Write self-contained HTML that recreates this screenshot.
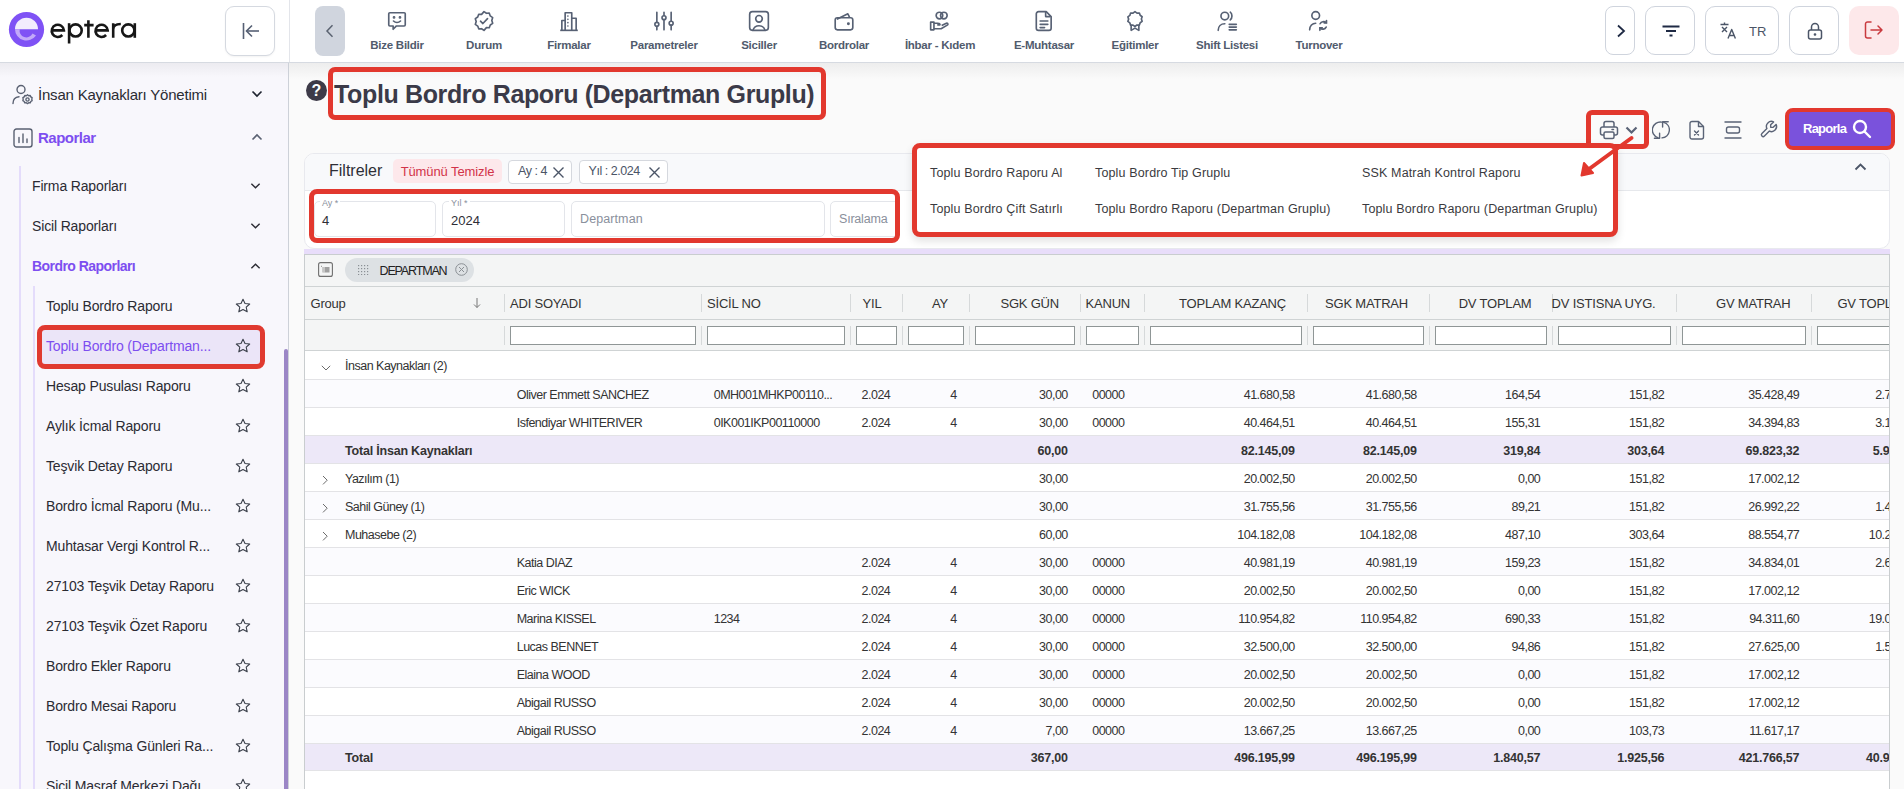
<!DOCTYPE html>
<html><head><meta charset="utf-8">
<style>
*{box-sizing:border-box;margin:0;padding:0}
html,body{width:1904px;height:789px;overflow:hidden;background:#fafafa;font-family:"Liberation Sans",sans-serif;color:#333}
.abs{position:absolute}
#hdr{position:absolute;left:0;top:0;width:1904px;height:63px;background:#fff;border-bottom:1px solid #d6dae1}
#side{position:absolute;left:0;top:63px;width:289px;height:726px;background:#f8f7fc;border-right:1px solid #cdd1d8;overflow:hidden}
.navi{position:absolute;top:0;height:62px;text-align:center}
.navi .lbl{position:absolute;top:38.5px;left:-20px;right:-20px;font-size:11.5px;font-weight:bold;color:#515b6d;white-space:nowrap;letter-spacing:-0.25px}
.navi svg{position:absolute;top:10px;left:50%;margin-left:-11px}
.hbtn{position:absolute;top:6px;height:49px;border:1px solid #cfd4dd;border-radius:10px;background:#fff}
.s2{position:absolute;left:32px;font-size:14px;color:#2b2b33;white-space:nowrap;letter-spacing:-0.15px;margin-top:1px}
.s3{position:absolute;left:46px;font-size:14px;color:#2b2b33;white-space:nowrap;letter-spacing:-0.15px;margin-top:1px}
.chev{position:absolute;left:251px}
.star{position:absolute;left:236px}
.inp{border:1px solid #e3e5ea;border-radius:5px;background:#fff}
.lblsm{font-size:9px;color:#8a909c;background:#fff;padding:0 2px}
.ht{font-size:13px;color:#333;white-space:nowrap;letter-spacing:-0.2px}
.nm{font-size:12.5px;color:#333;white-space:nowrap;letter-spacing:-0.5px}
.num{font-size:12.5px;color:#333;white-space:nowrap;letter-spacing:-0.5px}
.ht2{font-size:12.5px;color:#333;white-space:nowrap;letter-spacing:-0.5px}
.b{font-weight:bold;letter-spacing:-0.2px}
.mi{font-size:12.5px;color:#3a3a40;white-space:nowrap;letter-spacing:0.15px}
</style></head><body>
<div id="hdr">
  <!-- logo -->
  <svg class="abs" style="left:8px;top:11px" width="37" height="37" viewBox="0 0 37 37">
    <circle cx="18.5" cy="18.5" r="17.6" fill="#7f52f5"/>
    <path d="M7 18.2 A11.5 11.5 0 0 1 30 18.2 Z" fill="#f2edfd"/>
    <path d="M7 18.2 A11.5 11.5 0 0 0 28 24.5 L24.5 22.5 A6.8 6.8 0 0 1 11.7 18.2 Z" fill="#c2a9f9"/>
  </svg>
  <svg class="abs" style="left:48px;top:16px" width="92" height="30" viewBox="48 16 92 30" fill="none" stroke="#171717" stroke-width="2.6">
    <path d="M51.7 30.4h12.2A6.1 6.1 0 1 0 62.3 35"/>
    <path d="M69.1 23.2V43.5"/><circle cx="75.6" cy="30.45" r="6.1"/>
    <path d="M88.4 20.2V37.8M84.2 25.1h9.4"/>
    <path d="M95.5 30.4h12.2A6.1 6.1 0 1 0 106.1 35"/>
    <path d="M113.2 23.2V37.8M113.2 29.5c0-3.5 2.5-5.5 7.6-5.5"/>
    <circle cx="128.3" cy="30.45" r="6.1"/><path d="M134.8 23.2V37.8"/>
  </svg>
  <!-- collapse -->
  <div class="hbtn" style="left:225px;width:50px;height:50px;border-radius:9px;border-color:#d5d9e0;box-shadow:0 1px 2px rgba(0,0,0,.05)">
    <svg class="abs" style="left:14px;top:10px" width="22" height="22" viewBox="0 0 22 22" fill="none" stroke="#566074" stroke-width="1.6"><path d="M3.5 6v16"/><path d="M19 14H6.5"/><path d="M12 8.5 6.5 14l5.5 5.5"/></svg>
  </div>
  <div class="abs" style="left:289px;top:0;width:1px;height:62px;background:#e3e5ea"></div>
  <!-- back -->
  <div class="abs" style="left:315px;top:6px;width:30px;height:50px;border-radius:8px;background:#d0d5de">
    <svg class="abs" style="left:8px;top:17px" width="14" height="16" viewBox="0 0 14 16" fill="none" stroke="#5a6270" stroke-width="1.5"><path d="M9.5 2.3 4 8l5.5 5.7"/></svg>
  </div>

  <!-- nav items -->
  <div class="navi" style="left:357px;width:80px"><svg width="22" height="22" viewBox="0 0 20 20" fill="none" stroke="#576174" stroke-width="1.5" stroke-linejoin="round"><path d="M3.5 2.5h13a1 1 0 0 1 1 1v10a1 1 0 0 1-1 1H9.5l-3 3v-3h-3a1 1 0 0 1-1-1v-10a1 1 0 0 1 1-1z"/><circle cx="7.3" cy="6.8" r=".5" fill="#576174"/><circle cx="12.7" cy="6.8" r=".5" fill="#576174"/><path d="M6.8 10c1.8 1.6 4.6 1.6 6.4 0" stroke-linecap="round"/></svg><div class="lbl">Bize Bildir</div></div>
  <div class="navi" style="left:444px;width:80px"><svg width="22" height="22" viewBox="0 0 20 20" fill="none" stroke="#576174" stroke-width="1.5" stroke-linejoin="round"><path d="M10 1.5l2.2 1.5 2.6-.1.9 2.5 2.2 1.5-.8 2.6.8 2.6-2.2 1.5-.9 2.5-2.6-.1L10 18.5l-2.2-1.5-2.6.1-.9-2.5-2.2-1.5.8-2.6-.8-2.6 2.2-1.5.9-2.5 2.6.1z"/><path d="M6.8 10.2l2.2 2.1 4.2-4.4" stroke-linecap="round"/></svg><div class="lbl">Durum</div></div>
  <div class="navi" style="left:529px;width:80px"><svg width="22" height="22" viewBox="0 0 20 20" fill="none" stroke="#576174" stroke-width="1.5" stroke-linejoin="round"><path d="M2 18.5h16"/><path d="M6.5 18.5V2.5h6v16"/><path d="M12.5 7.5h4v11"/><path d="M3.5 18.5v-9h3"/><path d="M9 5.5v0M9 8.5v0M9 11.5v0M9 14.5v0" stroke-linecap="round"/></svg><div class="lbl">Firmalar</div></div>
  <div class="navi" style="left:619px;width:90px"><svg width="22" height="22" viewBox="0 0 20 20" fill="none" stroke="#576174" stroke-width="1.5" stroke-linecap="round"><path d="M3.5 2v9M3.5 15v3M10 2v3M10 9v9M16.5 2v8M16.5 14v4"/><circle cx="3.5" cy="13" r="1.8"/><circle cx="10" cy="7" r="1.8"/><circle cx="16.5" cy="12" r="1.8"/></svg><div class="lbl">Parametreler</div></div>
  <div class="navi" style="left:719px;width:80px"><svg width="22" height="22" viewBox="0 0 20 20" fill="none" stroke="#576174" stroke-width="1.5" stroke-linejoin="round"><rect x="1.5" y="1.5" width="17" height="17" rx="2.5"/><circle cx="10" cy="8" r="3"/><path d="M4.5 18.5c.8-2.8 3-4.2 5.5-4.2s4.7 1.4 5.5 4.2"/></svg><div class="lbl">Siciller</div></div>
  <div class="navi" style="left:804px;width:80px"><svg width="22" height="22" viewBox="0 0 20 20" fill="none" stroke="#576174" stroke-width="1.5" stroke-linejoin="round"><path d="M3.5 8.5l10-5 1.5 3"/><rect x="2" y="7" width="16" height="11" rx="2"/><circle cx="14" cy="12.5" r=".6" fill="#576174"/></svg><div class="lbl">Bordrolar</div></div>
  <div class="navi" style="left:895px;width:90px"><svg width="22" height="22" viewBox="0 0 20 20" fill="none" stroke="#576174" stroke-width="1.5" stroke-linejoin="round"><circle cx="9.5" cy="5" r="3"/><circle cx="13.5" cy="5" r="3"/><path d="M1.5 11h3v7h-3z"/><path d="M4.5 12h3.5c1 0 2 .8 2 1.5H7.5M4.5 17h6.5l6-3.5c.6-.8-.2-1.8-1.2-1.5l-4.3 2"/></svg><div class="lbl">İhbar - Kıdem</div></div>
  <div class="navi" style="left:1004px;width:80px"><svg width="22" height="22" viewBox="0 0 20 20" fill="none" stroke="#576174" stroke-width="1.5" stroke-linejoin="round"><path d="M5 1.5h7l4.5 4.5v10.5a2 2 0 0 1-2 2H5a2 2 0 0 1-2-2v-13a2 2 0 0 1 2-2z"/><path d="M11.5 1.5v4.5H16"/><path d="M6.5 10h7M6.5 13h7M6.5 16h4" stroke-linecap="round"/></svg><div class="lbl">E-Muhtasar</div></div>
  <div class="navi" style="left:1095px;width:80px"><svg width="22" height="22" viewBox="0 0 20 20" fill="none" stroke="#576174" stroke-width="1.5" stroke-linejoin="round"><path d="M10 1.5l1.8 1.3 2.2-.1.7 2.1 1.8 1.3-.7 2.1.7 2.1-1.8 1.3-.7 2.1-2.2-.1L10 15l-1.8-1.3-2.2.1-.7-2.1-1.8-1.3.7-2.1-.7-2.1 1.8-1.3.7-2.1 2.2.1z"/><path d="M6.5 13.5v5l3.5-2 3.5 2v-5"/></svg><div class="lbl">Eğitimler</div></div>
  <div class="navi" style="left:1187px;width:80px"><svg width="22" height="22" viewBox="0 0 20 20" fill="none" stroke="#576174" stroke-width="1.5" stroke-linecap="round"><circle cx="8" cy="5.5" r="3.5"/><path d="M2 18.5c0-3.5 2.5-6 6-6"/><path d="M13 2c1 .8 1.5 2 1.5 3.5s-.5 2.7-1.5 3.5"/><path d="M12 13h6.5M12 15.5h6.5M12 18h6.5"/></svg><div class="lbl">Shift Listesi</div></div>
  <div class="navi" style="left:1279px;width:80px"><svg width="22" height="22" viewBox="0 0 20 20" fill="none" stroke="#576174" stroke-width="1.5" stroke-linecap="round"><circle cx="7" cy="5" r="3.5"/><path d="M1.5 18c0-3.5 2.5-6 5.5-6"/><path d="M16.5 11.5a3.5 3.5 0 0 0-5.5 1M11 16.5a3.5 3.5 0 0 0 5.5-1"/><path d="M16.8 9.5v2.2h-2.2M10.8 18.5v-2.2h2.2"/></svg><div class="lbl">Turnover</div></div>
  <!-- right buttons -->
  <div class="hbtn" style="left:1605px;width:30px;border-radius:8px"><svg class="abs" style="left:8px;top:16px" width="14" height="16" viewBox="0 0 14 16" fill="none" stroke="#1f2a44" stroke-width="1.8"><path d="M4 2.5 10 8l-6 5.5"/></svg></div>
  <div class="hbtn" style="left:1645px;width:50px"><svg class="abs" style="left:15px;top:14px" width="20" height="20" viewBox="0 0 20 20" fill="none" stroke="#1f2a44" stroke-width="1.8"><path d="M1.5 5.5h17M5 10h10M8.5 14.5h3"/></svg></div>
  <div class="hbtn" style="left:1705px;width:74px"><svg class="abs" style="left:14px;top:14px" width="22" height="20" viewBox="0 0 22 20" fill="none" stroke="#4b5567" stroke-width="1.4" stroke-linejoin="round"><path d="M0.5 3.5h8M4.5 1.5v2M2 6l5 5M7 6l-5 5"/><path d="M8 17.5l3.7-9 3.7 9M9.3 14.5h4.8"/></svg><div class="abs" style="left:43px;top:17px;font-size:13px;color:#4b5567">TR</div></div>
  <div class="hbtn" style="left:1789px;width:50px"><svg class="abs" style="left:15px;top:14px" width="20" height="20" viewBox="0 0 20 20" fill="none" stroke="#4b5567" stroke-width="1.5"><rect x="3.5" y="9" width="13" height="9" rx="2"/><path d="M6.5 9V6a3.5 3.5 0 0 1 7 0v3"/><circle cx="10" cy="13.5" r=".6" fill="#4b5567"/></svg></div>
  <div class="hbtn" style="left:1849px;width:50px;border:none;background:#fde8ea"><svg class="abs" style="left:14px;top:14px" width="22" height="20" viewBox="0 0 22 20" fill="none" stroke="#c93a3f" stroke-width="1.5" stroke-linecap="round" stroke-linejoin="round"><path d="M8 2H4.5a2 2 0 0 0-2 2v12a2 2 0 0 0 2 2H8"/><path d="M8 10h11M15 6l4 4-4 4"/></svg></div>
</div>

<div id="side">

  <div class="abs" style="left:0;top:0;width:288px;height:14px;background:linear-gradient(#ecebf0,rgba(248,247,252,0))"></div>
  <svg class="abs" style="left:12px;top:21px" width="23" height="22" viewBox="0 0 23 22" fill="none" stroke="#5a6172" stroke-width="1.4" stroke-linecap="round"><circle cx="9" cy="5.5" r="4"/><path d="M1 19.5c0-4 2.5-6.5 6-6.8"/><circle cx="15.5" cy="15.5" r="1.6"/><path d="M15.5 10.8l1.2.9 1.5-.2.6 1.4 1.3.8-.3 1.5.3 1.5-1.3.8-.6 1.4-1.5-.2-1.2.9-1.2-.9-1.5.2-.6-1.4-1.3-.8.3-1.5-.3-1.5 1.3-.8.6-1.4 1.5.2z" stroke-linejoin="round"/></svg>
  <div class="abs" style="left:38px;top:22.5px;font-size:15px;color:#2b2b33;white-space:nowrap;letter-spacing:-0.2px">İnsan Kaynakları Yönetimi</div>
  <svg class="chev" style="top:27px" width="12" height="8" viewBox="0 0 12 8" fill="none" stroke="#1f2430" stroke-width="1.6"><path d="M1.5 1.5 6 6l4.5-4.5"/></svg>
  <svg class="abs" style="left:13px;top:65px" width="20" height="20" viewBox="0 0 20 20" fill="none" stroke="#5a6172" stroke-width="1.4" stroke-linecap="round"><rect x="1" y="1" width="18" height="18" rx="2.5"/><path d="M6 9.5v5M10 6v8.5M14 11v3.5"/></svg>
  <div class="abs" style="left:38px;top:66px;font-size:15px;font-weight:bold;color:#7d4ef0;white-space:nowrap;letter-spacing:-0.5px">Raporlar</div>
  <svg class="chev" style="top:70px" width="12" height="8" viewBox="0 0 12 8" fill="none" stroke="#5a6172" stroke-width="1.6"><path d="M1.5 6.5 6 2l4.5 4.5"/></svg>
  <div class="abs" style="left:19px;top:103px;width:2px;height:640px;background:#e4dcfb"></div>
  <div class="abs" style="left:33px;top:223px;width:2px;height:520px;background:#e4dcfb"></div>
  <div class="s2" style="top:114px;color:#2b2b33">Firma Raporları</div>
  <svg class="chev" style="left:250px;top:119px" width="11" height="8" viewBox="0 0 12 8" fill="none" stroke="#2b2b33" stroke-width="1.5"><path d="M1.5 1.5 6 6l4.5-4.5"/></svg>
  <div class="s2" style="top:154px;color:#2b2b33">Sicil Raporları</div>
  <svg class="chev" style="left:250px;top:159px" width="11" height="8" viewBox="0 0 12 8" fill="none" stroke="#2b2b33" stroke-width="1.5"><path d="M1.5 1.5 6 6l4.5-4.5"/></svg>
  <div class="s2" style="top:194px;font-weight:bold;color:#7d4ef0;letter-spacing:-0.55px">Bordro Raporları</div>
  <svg class="chev" style="left:250px;top:199px" width="11" height="8" viewBox="0 0 12 8" fill="none" stroke="#2b2b33" stroke-width="1.5"><path d="M1.5 6.5 6 2l4.5 4.5"/></svg>
  <div class="abs" style="left:37px;top:261.5px;width:228px;height:44px;border:5px solid #e03a30;border-radius:8px;background:#ebe5f8"></div>
  <div class="s3" style="top:234px;color:#2b2b33">Toplu Bordro Raporu</div>
  <svg class="star" style="left:235px;top:235px" width="16" height="16" viewBox="0 0 16 16" fill="none" stroke="#3a3f4a" stroke-width="1.1" stroke-linejoin="round"><path d="M8 1.2l2 4.3 4.7.5-3.5 3.2 1 4.6L8 11.5l-4.2 2.3 1-4.6L1.3 6l4.7-.5z"/></svg>
  <div class="s3" style="top:274px;color:#7d4ef0">Toplu Bordro (Departman...</div>
  <svg class="star" style="left:235px;top:275px" width="16" height="16" viewBox="0 0 16 16" fill="none" stroke="#3a3f4a" stroke-width="1.1" stroke-linejoin="round"><path d="M8 1.2l2 4.3 4.7.5-3.5 3.2 1 4.6L8 11.5l-4.2 2.3 1-4.6L1.3 6l4.7-.5z"/></svg>
  <div class="s3" style="top:314px;color:#2b2b33">Hesap Pusulası Raporu</div>
  <svg class="star" style="left:235px;top:315px" width="16" height="16" viewBox="0 0 16 16" fill="none" stroke="#3a3f4a" stroke-width="1.1" stroke-linejoin="round"><path d="M8 1.2l2 4.3 4.7.5-3.5 3.2 1 4.6L8 11.5l-4.2 2.3 1-4.6L1.3 6l4.7-.5z"/></svg>
  <div class="s3" style="top:354px;color:#2b2b33">Aylık İcmal Raporu</div>
  <svg class="star" style="left:235px;top:355px" width="16" height="16" viewBox="0 0 16 16" fill="none" stroke="#3a3f4a" stroke-width="1.1" stroke-linejoin="round"><path d="M8 1.2l2 4.3 4.7.5-3.5 3.2 1 4.6L8 11.5l-4.2 2.3 1-4.6L1.3 6l4.7-.5z"/></svg>
  <div class="s3" style="top:394px;color:#2b2b33">Teşvik Detay Raporu</div>
  <svg class="star" style="left:235px;top:395px" width="16" height="16" viewBox="0 0 16 16" fill="none" stroke="#3a3f4a" stroke-width="1.1" stroke-linejoin="round"><path d="M8 1.2l2 4.3 4.7.5-3.5 3.2 1 4.6L8 11.5l-4.2 2.3 1-4.6L1.3 6l4.7-.5z"/></svg>
  <div class="s3" style="top:434px;color:#2b2b33">Bordro İcmal Raporu (Mu...</div>
  <svg class="star" style="left:235px;top:435px" width="16" height="16" viewBox="0 0 16 16" fill="none" stroke="#3a3f4a" stroke-width="1.1" stroke-linejoin="round"><path d="M8 1.2l2 4.3 4.7.5-3.5 3.2 1 4.6L8 11.5l-4.2 2.3 1-4.6L1.3 6l4.7-.5z"/></svg>
  <div class="s3" style="top:474px;color:#2b2b33">Muhtasar Vergi Kontrol R...</div>
  <svg class="star" style="left:235px;top:475px" width="16" height="16" viewBox="0 0 16 16" fill="none" stroke="#3a3f4a" stroke-width="1.1" stroke-linejoin="round"><path d="M8 1.2l2 4.3 4.7.5-3.5 3.2 1 4.6L8 11.5l-4.2 2.3 1-4.6L1.3 6l4.7-.5z"/></svg>
  <div class="s3" style="top:514px;color:#2b2b33">27103 Teşvik Detay Raporu</div>
  <svg class="star" style="left:235px;top:515px" width="16" height="16" viewBox="0 0 16 16" fill="none" stroke="#3a3f4a" stroke-width="1.1" stroke-linejoin="round"><path d="M8 1.2l2 4.3 4.7.5-3.5 3.2 1 4.6L8 11.5l-4.2 2.3 1-4.6L1.3 6l4.7-.5z"/></svg>
  <div class="s3" style="top:554px;color:#2b2b33">27103 Teşvik Özet Raporu</div>
  <svg class="star" style="left:235px;top:555px" width="16" height="16" viewBox="0 0 16 16" fill="none" stroke="#3a3f4a" stroke-width="1.1" stroke-linejoin="round"><path d="M8 1.2l2 4.3 4.7.5-3.5 3.2 1 4.6L8 11.5l-4.2 2.3 1-4.6L1.3 6l4.7-.5z"/></svg>
  <div class="s3" style="top:594px;color:#2b2b33">Bordro Ekler Raporu</div>
  <svg class="star" style="left:235px;top:595px" width="16" height="16" viewBox="0 0 16 16" fill="none" stroke="#3a3f4a" stroke-width="1.1" stroke-linejoin="round"><path d="M8 1.2l2 4.3 4.7.5-3.5 3.2 1 4.6L8 11.5l-4.2 2.3 1-4.6L1.3 6l4.7-.5z"/></svg>
  <div class="s3" style="top:634px;color:#2b2b33">Bordro Mesai Raporu</div>
  <svg class="star" style="left:235px;top:635px" width="16" height="16" viewBox="0 0 16 16" fill="none" stroke="#3a3f4a" stroke-width="1.1" stroke-linejoin="round"><path d="M8 1.2l2 4.3 4.7.5-3.5 3.2 1 4.6L8 11.5l-4.2 2.3 1-4.6L1.3 6l4.7-.5z"/></svg>
  <div class="s3" style="top:674px;color:#2b2b33">Toplu Çalışma Günleri Ra...</div>
  <svg class="star" style="left:235px;top:675px" width="16" height="16" viewBox="0 0 16 16" fill="none" stroke="#3a3f4a" stroke-width="1.1" stroke-linejoin="round"><path d="M8 1.2l2 4.3 4.7.5-3.5 3.2 1 4.6L8 11.5l-4.2 2.3 1-4.6L1.3 6l4.7-.5z"/></svg>
  <div class="s3" style="top:714px;color:#2b2b33">Sicil Masraf Merkezi Dağı...</div>
  <svg class="star" style="left:235px;top:715px" width="16" height="16" viewBox="0 0 16 16" fill="none" stroke="#3a3f4a" stroke-width="1.1" stroke-linejoin="round"><path d="M8 1.2l2 4.3 4.7.5-3.5 3.2 1 4.6L8 11.5l-4.2 2.3 1-4.6L1.3 6l4.7-.5z"/></svg>
  <div class="abs" style="left:284px;top:286px;width:4px;height:460px;background:#9b86c6;border-radius:2px"></div>
</div>


<div id="main" class="abs" style="left:289px;top:63px;width:1615px;height:726px;background:#fafafa;overflow:hidden">
  <div class="abs" style="left:0;top:0;width:1615px;height:16px;background:linear-gradient(#ededed,rgba(250,250,250,0))"></div>
</div>
<!--GRID-->
<div class="abs" style="left:304px;top:249px;width:1586px;height:5px;background:#e8ddfa"></div>
<div id="grid" class="abs" style="left:304px;top:254px;width:1586px;height:535px;border-left:1px solid #c9cdcf;border-right:1px solid #c9cdcf;border-top:1px solid #c9cdcf;background:#fff;overflow:hidden">
<div class="abs" style="left:0;top:0;width:1586px;height:32px;background:#f4f5f5;border-bottom:1px solid #cfd3d4"></div>
<svg class="abs" style="left:12.5px;top:6.5px" width="15" height="15" viewBox="0 0 15 15" fill="none"><rect x=".6" y=".6" width="13.8" height="13.8" rx="2" stroke="#6f6f6f" stroke-width="1.1"/><path d="M3 4.3h1" stroke="#8a8a8a" stroke-width="1"/><rect x="4.5" y="5" width="7" height="5.5" fill="#a0a0a0"/><path d="M6 5v5.5" stroke="#fff" stroke-width=".8"/></svg>
<div class="abs" style="left:40px;top:3px;width:129px;height:24px;border-radius:12px;background:#dde1e4"></div>
<svg class="abs" style="left:52.5px;top:10px" width="11" height="10" viewBox="0 0 11 10" fill="#8a8f94"><rect x="0" y="0" width="1.2" height="1.2"/><rect x="3" y="0" width="1.2" height="1.2"/><rect x="6" y="0" width="1.2" height="1.2"/><rect x="9" y="0" width="1.2" height="1.2"/><rect x="0" y="3" width="1.2" height="1.2"/><rect x="3" y="3" width="1.2" height="1.2"/><rect x="6" y="3" width="1.2" height="1.2"/><rect x="9" y="3" width="1.2" height="1.2"/><rect x="0" y="6" width="1.2" height="1.2"/><rect x="3" y="6" width="1.2" height="1.2"/><rect x="6" y="6" width="1.2" height="1.2"/><rect x="9" y="6" width="1.2" height="1.2"/><rect x="0" y="9" width="1.2" height="1" /><rect x="3" y="9" width="1.2" height="1"/><rect x="6" y="9" width="1.2" height="1"/><rect x="9" y="9" width="1.2" height="1"/></svg>
<div class="abs gt" style="left:74.5px;top:9px;font-size:12.5px;letter-spacing:-1.15px;color:#222">DEPARTMAN</div>
<svg class="abs" style="left:150px;top:8px" width="13" height="13" viewBox="0 0 13 13" fill="none" stroke="#8a8f94" stroke-width="1"><circle cx="6.5" cy="6.5" r="5.8"/><path d="M4 4l5 5M9 4l-5 5"/></svg>
<div class="abs" style="left:0;top:32px;width:1586px;height:33px;background:#f4f5f5;border-bottom:1px solid #cfd3d4"></div>
<div class="abs" style="left:0;top:65px;width:1586px;height:31px;background:#f4f5f5;border-bottom:1px solid #cfd3d4"></div>
<div class="abs ht" style="left:5.5px;top:41px">Group</div>
<div class="abs" style="left:199px;top:39px;width:1px;height:18px;background:#d6d9da"></div>
<div class="abs" style="left:199px;top:71px;width:1px;height:19px;background:#d6d9da"></div>
<div class="abs" style="left:205px;top:71px;width:186px;height:19px;border:1px solid #8f9696;background:#fff"></div>
<div class="abs ht" style="left:205px;top:41px">ADI SOYADI</div>
<div class="abs" style="left:396px;top:39px;width:1px;height:18px;background:#d6d9da"></div>
<div class="abs" style="left:396px;top:71px;width:1px;height:19px;background:#d6d9da"></div>
<div class="abs" style="left:402px;top:71px;width:138px;height:19px;border:1px solid #8f9696;background:#fff"></div>
<div class="abs ht" style="left:402px;top:41px">SİCİL NO</div>
<div class="abs" style="left:545px;top:39px;width:1px;height:18px;background:#d6d9da"></div>
<div class="abs" style="left:545px;top:71px;width:1px;height:19px;background:#d6d9da"></div>
<div class="abs" style="left:551px;top:71px;width:41px;height:19px;border:1px solid #8f9696;background:#fff"></div>
<div class="abs ht" style="right:1007.5px;top:41px;text-align:right">YIL</div>
<div class="abs" style="left:597px;top:39px;width:1px;height:18px;background:#d6d9da"></div>
<div class="abs" style="left:597px;top:71px;width:1px;height:19px;background:#d6d9da"></div>
<div class="abs" style="left:603px;top:71px;width:55.5px;height:19px;border:1px solid #8f9696;background:#fff"></div>
<div class="abs ht" style="right:941.0px;top:41px;text-align:right">AY</div>
<div class="abs" style="left:663.5px;top:39px;width:1px;height:18px;background:#d6d9da"></div>
<div class="abs" style="left:663.5px;top:71px;width:1px;height:19px;background:#d6d9da"></div>
<div class="abs" style="left:669.5px;top:71px;width:100.0px;height:19px;border:1px solid #8f9696;background:#fff"></div>
<div class="abs ht" style="right:830.0px;top:41px;text-align:right">SGK GÜN</div>
<div class="abs" style="left:774.5px;top:39px;width:1px;height:18px;background:#d6d9da"></div>
<div class="abs" style="left:774.5px;top:71px;width:1px;height:19px;background:#d6d9da"></div>
<div class="abs" style="left:780.5px;top:71px;width:53.0px;height:19px;border:1px solid #8f9696;background:#fff"></div>
<div class="abs ht" style="left:780.5px;top:41px">KANUN</div>
<div class="abs" style="left:838.5px;top:39px;width:1px;height:18px;background:#d6d9da"></div>
<div class="abs" style="left:838.5px;top:71px;width:1px;height:19px;background:#d6d9da"></div>
<div class="abs" style="left:844.5px;top:71px;width:152.0px;height:19px;border:1px solid #8f9696;background:#fff"></div>
<div class="abs ht" style="right:603.0px;top:41px;text-align:right">TOPLAM KAZANÇ</div>
<div class="abs" style="left:1001.5px;top:39px;width:1px;height:18px;background:#d6d9da"></div>
<div class="abs" style="left:1001.5px;top:71px;width:1px;height:19px;background:#d6d9da"></div>
<div class="abs" style="left:1007.5px;top:71px;width:111.0px;height:19px;border:1px solid #8f9696;background:#fff"></div>
<div class="abs ht" style="right:481.0px;top:41px;text-align:right">SGK MATRAH</div>
<div class="abs" style="left:1123.5px;top:39px;width:1px;height:18px;background:#d6d9da"></div>
<div class="abs" style="left:1123.5px;top:71px;width:1px;height:19px;background:#d6d9da"></div>
<div class="abs" style="left:1129.5px;top:71px;width:112.5px;height:19px;border:1px solid #8f9696;background:#fff"></div>
<div class="abs ht" style="right:357.5px;top:41px;text-align:right">DV TOPLAM</div>
<div class="abs" style="left:1247px;top:39px;width:1px;height:18px;background:#d6d9da"></div>
<div class="abs" style="left:1247px;top:71px;width:1px;height:19px;background:#d6d9da"></div>
<div class="abs" style="left:1253px;top:71px;width:113px;height:19px;border:1px solid #8f9696;background:#fff"></div>
<div class="abs ht" style="right:233.5px;top:41px;text-align:right">DV ISTISNA UYG.</div>
<div class="abs" style="left:1371px;top:39px;width:1px;height:18px;background:#d6d9da"></div>
<div class="abs" style="left:1371px;top:71px;width:1px;height:19px;background:#d6d9da"></div>
<div class="abs" style="left:1377px;top:71px;width:124px;height:19px;border:1px solid #8f9696;background:#fff"></div>
<div class="abs ht" style="right:98.5px;top:41px;text-align:right">GV MATRAH</div>
<div class="abs" style="left:1506px;top:39px;width:1px;height:18px;background:#d6d9da"></div>
<div class="abs" style="left:1506px;top:71px;width:1px;height:19px;background:#d6d9da"></div>
<div class="abs" style="left:1512px;top:71px;width:109.5px;height:19px;border:1px solid #8f9696;background:#fff"></div>
<div class="abs ht" style="right:-22.0px;top:41px;text-align:right">GV TOPLAM</div>
<svg class="abs" style="left:167px;top:41px" width="10" height="13" viewBox="0 0 10 13" fill="none" stroke="#777" stroke-width="1"><path d="M5 2v9.5M2 8.5l3 3 3-3"/></svg>
<div class="abs" style="left:0;top:95.5px;width:1586px;height:29px;border-bottom:1px solid #e3e3e6"></div>
<div class="abs nm" style="left:40px;top:104.0px">İnsan Kaynakları (2)</div>
<svg class="abs" style="left:15.5px;top:109.5px" width="10" height="6" viewBox="0 0 10 6" fill="none" stroke="#6b6b6b" stroke-width="1"><path d="M.8 .8l4.2 4.2L9.2 .8"/></svg>
<div class="abs" style="left:0;top:124.5px;width:1586px;height:28px;background:#fbfbfe;border-bottom:1px solid #e3e3e6"></div>
<div class="abs nm" style="left:211.70000000000005px;top:132.5px">Oliver Emmett SANCHEZ</div>
<div class="abs nm" style="left:408.70000000000005px;top:132.5px">0MH001MHKP00110...</div>
<div class="abs num" style="right:998.7px;top:132.5px;text-align:right">2.024</div>
<div class="abs num" style="right:932.2px;top:132.5px;text-align:right">4</div>
<div class="abs num" style="right:821.2px;top:132.5px;text-align:right">30,00</div>
<div class="abs nm" style="left:787.2px;top:132.5px">00000</div>
<div class="abs num" style="right:594.2px;top:132.5px;text-align:right">41.680,58</div>
<div class="abs num" style="right:472.20000000000005px;top:132.5px;text-align:right">41.680,58</div>
<div class="abs num" style="right:348.70000000000005px;top:132.5px;text-align:right">164,54</div>
<div class="abs num" style="right:224.70000000000005px;top:132.5px;text-align:right">151,82</div>
<div class="abs num" style="right:89.70000000000005px;top:132.5px;text-align:right">35.428,49</div>
<div class="abs num" style="right:-30.799999999999955px;top:132.5px;text-align:right">2.728,00</div>
<div class="abs" style="left:0;top:152.5px;width:1586px;height:28px;border-bottom:1px solid #e3e3e6"></div>
<div class="abs nm" style="left:211.70000000000005px;top:160.5px">Isfendiyar WHITERIVER</div>
<div class="abs nm" style="left:408.70000000000005px;top:160.5px">0IK001IKP00110000</div>
<div class="abs num" style="right:998.7px;top:160.5px;text-align:right">2.024</div>
<div class="abs num" style="right:932.2px;top:160.5px;text-align:right">4</div>
<div class="abs num" style="right:821.2px;top:160.5px;text-align:right">30,00</div>
<div class="abs nm" style="left:787.2px;top:160.5px">00000</div>
<div class="abs num" style="right:594.2px;top:160.5px;text-align:right">40.464,51</div>
<div class="abs num" style="right:472.20000000000005px;top:160.5px;text-align:right">40.464,51</div>
<div class="abs num" style="right:348.70000000000005px;top:160.5px;text-align:right">155,31</div>
<div class="abs num" style="right:224.70000000000005px;top:160.5px;text-align:right">151,82</div>
<div class="abs num" style="right:89.70000000000005px;top:160.5px;text-align:right">34.394,83</div>
<div class="abs num" style="right:-30.799999999999955px;top:160.5px;text-align:right">3.190,00</div>
<div class="abs" style="left:0;top:180.5px;width:1586px;height:28px;background:#ede8f8;border-bottom:1px solid #e3e3e6"></div>
<div class="abs ht2 b" style="left:40px;top:188.5px">Total İnsan Kaynakları</div>
<div class="abs num b" style="right:821.2px;top:188.5px;text-align:right">60,00</div>
<div class="abs num b" style="right:594.2px;top:188.5px;text-align:right">82.145,09</div>
<div class="abs num b" style="right:472.20000000000005px;top:188.5px;text-align:right">82.145,09</div>
<div class="abs num b" style="right:348.70000000000005px;top:188.5px;text-align:right">319,84</div>
<div class="abs num b" style="right:224.70000000000005px;top:188.5px;text-align:right">303,64</div>
<div class="abs num b" style="right:89.70000000000005px;top:188.5px;text-align:right">69.823,32</div>
<div class="abs num b" style="right:-30.799999999999955px;top:188.5px;text-align:right">5.918,00</div>
<div class="abs" style="left:0;top:208.5px;width:1586px;height:28px;border-bottom:1px solid #e3e3e6"></div>
<div class="abs nm" style="left:40px;top:216.5px">Yazılım (1)</div>
<svg class="abs" style="left:17px;top:219.5px" width="7" height="11" viewBox="0 0 7 11" fill="none" stroke="#6b6b6b" stroke-width="1"><path d="M1 1l4.2 4.2L1 9.4"/></svg>
<div class="abs num" style="right:821.2px;top:216.5px;text-align:right">30,00</div>
<div class="abs num" style="right:594.2px;top:216.5px;text-align:right">20.002,50</div>
<div class="abs num" style="right:472.20000000000005px;top:216.5px;text-align:right">20.002,50</div>
<div class="abs num" style="right:348.70000000000005px;top:216.5px;text-align:right">0,00</div>
<div class="abs num" style="right:224.70000000000005px;top:216.5px;text-align:right">151,82</div>
<div class="abs num" style="right:89.70000000000005px;top:216.5px;text-align:right">17.002,12</div>
<div class="abs" style="left:0;top:236.5px;width:1586px;height:28px;background:#fbfbfe;border-bottom:1px solid #e3e3e6"></div>
<div class="abs nm" style="left:40px;top:244.5px">Sahil Güney (1)</div>
<svg class="abs" style="left:17px;top:247.5px" width="7" height="11" viewBox="0 0 7 11" fill="none" stroke="#6b6b6b" stroke-width="1"><path d="M1 1l4.2 4.2L1 9.4"/></svg>
<div class="abs num" style="right:821.2px;top:244.5px;text-align:right">30,00</div>
<div class="abs num" style="right:594.2px;top:244.5px;text-align:right">31.755,56</div>
<div class="abs num" style="right:472.20000000000005px;top:244.5px;text-align:right">31.755,56</div>
<div class="abs num" style="right:348.70000000000005px;top:244.5px;text-align:right">89,21</div>
<div class="abs num" style="right:224.70000000000005px;top:244.5px;text-align:right">151,82</div>
<div class="abs num" style="right:89.70000000000005px;top:244.5px;text-align:right">26.992,22</div>
<div class="abs num" style="right:-30.799999999999955px;top:244.5px;text-align:right">1.428,00</div>
<div class="abs" style="left:0;top:264.5px;width:1586px;height:28px;border-bottom:1px solid #e3e3e6"></div>
<div class="abs nm" style="left:40px;top:272.5px">Muhasebe (2)</div>
<svg class="abs" style="left:17px;top:275.5px" width="7" height="11" viewBox="0 0 7 11" fill="none" stroke="#6b6b6b" stroke-width="1"><path d="M1 1l4.2 4.2L1 9.4"/></svg>
<div class="abs num" style="right:821.2px;top:272.5px;text-align:right">60,00</div>
<div class="abs num" style="right:594.2px;top:272.5px;text-align:right">104.182,08</div>
<div class="abs num" style="right:472.20000000000005px;top:272.5px;text-align:right">104.182,08</div>
<div class="abs num" style="right:348.70000000000005px;top:272.5px;text-align:right">487,10</div>
<div class="abs num" style="right:224.70000000000005px;top:272.5px;text-align:right">303,64</div>
<div class="abs num" style="right:89.70000000000005px;top:272.5px;text-align:right">88.554,77</div>
<div class="abs num" style="right:-30.799999999999955px;top:272.5px;text-align:right">10.238,00</div>
<div class="abs" style="left:0;top:292.5px;width:1586px;height:28px;background:#fbfbfe;border-bottom:1px solid #e3e3e6"></div>
<div class="abs nm" style="left:211.70000000000005px;top:300.5px">Katia DIAZ</div>
<div class="abs num" style="right:998.7px;top:300.5px;text-align:right">2.024</div>
<div class="abs num" style="right:932.2px;top:300.5px;text-align:right">4</div>
<div class="abs num" style="right:821.2px;top:300.5px;text-align:right">30,00</div>
<div class="abs nm" style="left:787.2px;top:300.5px">00000</div>
<div class="abs num" style="right:594.2px;top:300.5px;text-align:right">40.981,19</div>
<div class="abs num" style="right:472.20000000000005px;top:300.5px;text-align:right">40.981,19</div>
<div class="abs num" style="right:348.70000000000005px;top:300.5px;text-align:right">159,23</div>
<div class="abs num" style="right:224.70000000000005px;top:300.5px;text-align:right">151,82</div>
<div class="abs num" style="right:89.70000000000005px;top:300.5px;text-align:right">34.834,01</div>
<div class="abs num" style="right:-30.799999999999955px;top:300.5px;text-align:right">2.690,00</div>
<div class="abs" style="left:0;top:320.5px;width:1586px;height:28px;border-bottom:1px solid #e3e3e6"></div>
<div class="abs nm" style="left:211.70000000000005px;top:328.5px">Eric WICK</div>
<div class="abs num" style="right:998.7px;top:328.5px;text-align:right">2.024</div>
<div class="abs num" style="right:932.2px;top:328.5px;text-align:right">4</div>
<div class="abs num" style="right:821.2px;top:328.5px;text-align:right">30,00</div>
<div class="abs nm" style="left:787.2px;top:328.5px">00000</div>
<div class="abs num" style="right:594.2px;top:328.5px;text-align:right">20.002,50</div>
<div class="abs num" style="right:472.20000000000005px;top:328.5px;text-align:right">20.002,50</div>
<div class="abs num" style="right:348.70000000000005px;top:328.5px;text-align:right">0,00</div>
<div class="abs num" style="right:224.70000000000005px;top:328.5px;text-align:right">151,82</div>
<div class="abs num" style="right:89.70000000000005px;top:328.5px;text-align:right">17.002,12</div>
<div class="abs" style="left:0;top:348.5px;width:1586px;height:28px;background:#fbfbfe;border-bottom:1px solid #e3e3e6"></div>
<div class="abs nm" style="left:211.70000000000005px;top:356.5px">Marina KISSEL</div>
<div class="abs nm" style="left:408.70000000000005px;top:356.5px">1234</div>
<div class="abs num" style="right:998.7px;top:356.5px;text-align:right">2.024</div>
<div class="abs num" style="right:932.2px;top:356.5px;text-align:right">4</div>
<div class="abs num" style="right:821.2px;top:356.5px;text-align:right">30,00</div>
<div class="abs nm" style="left:787.2px;top:356.5px">00000</div>
<div class="abs num" style="right:594.2px;top:356.5px;text-align:right">110.954,82</div>
<div class="abs num" style="right:472.20000000000005px;top:356.5px;text-align:right">110.954,82</div>
<div class="abs num" style="right:348.70000000000005px;top:356.5px;text-align:right">690,33</div>
<div class="abs num" style="right:224.70000000000005px;top:356.5px;text-align:right">151,82</div>
<div class="abs num" style="right:89.70000000000005px;top:356.5px;text-align:right">94.311,60</div>
<div class="abs num" style="right:-30.799999999999955px;top:356.5px;text-align:right">19.040,00</div>
<div class="abs" style="left:0;top:376.5px;width:1586px;height:28px;border-bottom:1px solid #e3e3e6"></div>
<div class="abs nm" style="left:211.70000000000005px;top:384.5px">Lucas BENNET</div>
<div class="abs num" style="right:998.7px;top:384.5px;text-align:right">2.024</div>
<div class="abs num" style="right:932.2px;top:384.5px;text-align:right">4</div>
<div class="abs num" style="right:821.2px;top:384.5px;text-align:right">30,00</div>
<div class="abs nm" style="left:787.2px;top:384.5px">00000</div>
<div class="abs num" style="right:594.2px;top:384.5px;text-align:right">32.500,00</div>
<div class="abs num" style="right:472.20000000000005px;top:384.5px;text-align:right">32.500,00</div>
<div class="abs num" style="right:348.70000000000005px;top:384.5px;text-align:right">94,86</div>
<div class="abs num" style="right:224.70000000000005px;top:384.5px;text-align:right">151,82</div>
<div class="abs num" style="right:89.70000000000005px;top:384.5px;text-align:right">27.625,00</div>
<div class="abs num" style="right:-30.799999999999955px;top:384.5px;text-align:right">1.520,00</div>
<div class="abs" style="left:0;top:404.5px;width:1586px;height:28px;background:#fbfbfe;border-bottom:1px solid #e3e3e6"></div>
<div class="abs nm" style="left:211.70000000000005px;top:412.5px">Elaina WOOD</div>
<div class="abs num" style="right:998.7px;top:412.5px;text-align:right">2.024</div>
<div class="abs num" style="right:932.2px;top:412.5px;text-align:right">4</div>
<div class="abs num" style="right:821.2px;top:412.5px;text-align:right">30,00</div>
<div class="abs nm" style="left:787.2px;top:412.5px">00000</div>
<div class="abs num" style="right:594.2px;top:412.5px;text-align:right">20.002,50</div>
<div class="abs num" style="right:472.20000000000005px;top:412.5px;text-align:right">20.002,50</div>
<div class="abs num" style="right:348.70000000000005px;top:412.5px;text-align:right">0,00</div>
<div class="abs num" style="right:224.70000000000005px;top:412.5px;text-align:right">151,82</div>
<div class="abs num" style="right:89.70000000000005px;top:412.5px;text-align:right">17.002,12</div>
<div class="abs" style="left:0;top:432.5px;width:1586px;height:28px;border-bottom:1px solid #e3e3e6"></div>
<div class="abs nm" style="left:211.70000000000005px;top:440.5px">Abigail RUSSO</div>
<div class="abs num" style="right:998.7px;top:440.5px;text-align:right">2.024</div>
<div class="abs num" style="right:932.2px;top:440.5px;text-align:right">4</div>
<div class="abs num" style="right:821.2px;top:440.5px;text-align:right">30,00</div>
<div class="abs nm" style="left:787.2px;top:440.5px">00000</div>
<div class="abs num" style="right:594.2px;top:440.5px;text-align:right">20.002,50</div>
<div class="abs num" style="right:472.20000000000005px;top:440.5px;text-align:right">20.002,50</div>
<div class="abs num" style="right:348.70000000000005px;top:440.5px;text-align:right">0,00</div>
<div class="abs num" style="right:224.70000000000005px;top:440.5px;text-align:right">151,82</div>
<div class="abs num" style="right:89.70000000000005px;top:440.5px;text-align:right">17.002,12</div>
<div class="abs" style="left:0;top:460.5px;width:1586px;height:28px;background:#fbfbfe;border-bottom:1px solid #e3e3e6"></div>
<div class="abs nm" style="left:211.70000000000005px;top:468.5px">Abigail RUSSO</div>
<div class="abs num" style="right:998.7px;top:468.5px;text-align:right">2.024</div>
<div class="abs num" style="right:932.2px;top:468.5px;text-align:right">4</div>
<div class="abs num" style="right:821.2px;top:468.5px;text-align:right">7,00</div>
<div class="abs nm" style="left:787.2px;top:468.5px">00000</div>
<div class="abs num" style="right:594.2px;top:468.5px;text-align:right">13.667,25</div>
<div class="abs num" style="right:472.20000000000005px;top:468.5px;text-align:right">13.667,25</div>
<div class="abs num" style="right:348.70000000000005px;top:468.5px;text-align:right">0,00</div>
<div class="abs num" style="right:224.70000000000005px;top:468.5px;text-align:right">103,73</div>
<div class="abs num" style="right:89.70000000000005px;top:468.5px;text-align:right">11.617,17</div>
<div class="abs" style="left:0;top:488.5px;width:1586px;height:27.5px;background:#ede8f8;border-bottom:1px solid #e3e3e6"></div>
<div class="abs ht2 b" style="left:40px;top:496.25px">Total</div>
<div class="abs num b" style="right:821.2px;top:496.25px;text-align:right">367,00</div>
<div class="abs num b" style="right:594.2px;top:496.25px;text-align:right">496.195,99</div>
<div class="abs num b" style="right:472.20000000000005px;top:496.25px;text-align:right">496.195,99</div>
<div class="abs num b" style="right:348.70000000000005px;top:496.25px;text-align:right">1.840,57</div>
<div class="abs num b" style="right:224.70000000000005px;top:496.25px;text-align:right">1.925,56</div>
<div class="abs num b" style="right:89.70000000000005px;top:496.25px;text-align:right">421.766,57</div>
<div class="abs num b" style="right:-30.799999999999955px;top:496.25px;text-align:right">40.904,00</div>
</div>
<!--/GRID-->
<!-- title -->
<svg class="abs" style="left:305.5px;top:80px" width="21" height="21" viewBox="0 0 21 21"><circle cx="10.5" cy="10.5" r="10.5" fill="#3d3a48"/><text x="10.5" y="16.3" text-anchor="middle" font-family="Liberation Sans" font-weight="bold" font-size="16" fill="#fff">?</text></svg>
<div class="abs" style="left:328px;top:67px;width:498px;height:53px;border:5px solid #e2382e;border-radius:7px"></div>
<div class="abs" style="left:334px;top:80px;font-size:25px;font-weight:bold;color:#3b3a48;white-space:nowrap;letter-spacing:-0.36px">Toplu Bordro Raporu (Departman Gruplu)</div>

<!-- toolbar -->
<svg class="abs" style="left:1599px;top:120px" width="20" height="20" viewBox="0 0 20 20" fill="none" stroke="#5a6376" stroke-width="1.5" stroke-linejoin="round"><path d="M5 7V3.5a2 2 0 0 1 2-2h6a2 2 0 0 1 2 2V7"/><path d="M5 15H3.5a2 2 0 0 1-2-2V9a2 2 0 0 1 2-2h13a2 2 0 0 1 2 2v4a2 2 0 0 1-2 2H15"/><rect x="5" y="12" width="10" height="6.5" rx="1.5"/><path d="M13 9.5h1.5" stroke-linecap="round"/></svg>
<svg class="abs" style="left:1625px;top:126px" width="13" height="9" viewBox="0 0 13 9" fill="none" stroke="#5a6376" stroke-width="2.2"><path d="M1.5 1.5l5 5 5-5"/></svg>
<div class="abs" style="left:1585.5px;top:110px;width:63.5px;height:39px;border:5px solid #e2382e;border-radius:6px"></div>
<svg class="abs" style="left:1652px;top:120px" width="18" height="20" viewBox="0 0 18 20" fill="none" stroke="#5a6376" stroke-width="1.4" stroke-linecap="round" stroke-linejoin="round"><path d="M9.5 2.1A8 8 0 0 0 5.8 17.6"/><path d="M7.6 13.2v5.1H2.4"/><path d="M10 17.9A8 8 0 0 0 11.8 2.3"/><path d="M16.2 1.8h-5.6v5.2"/></svg>
<svg class="abs" style="left:1689px;top:120px" width="16" height="20" viewBox="0 0 16 20" fill="none" stroke="#5a6376" stroke-width="1.4" stroke-linejoin="round"><path d="M3 1.5h6.5l5 5v10.5a2 2 0 0 1-2 2H3a2 2 0 0 1-2-2v-13.5a2 2 0 0 1 2-2z"/><path d="M9.5 1.5v5h5"/><path d="M5.5 11l4 4M9.5 11l-4 4" stroke-linecap="round"/></svg>
<svg class="abs" style="left:1724px;top:121px" width="18" height="18" viewBox="0 0 18 18" fill="none" stroke="#5a6376" stroke-width="1.4" stroke-linecap="round"><path d="M1 1h16M1 17h16"/><rect x="2.5" y="6" width="13" height="6" rx="2"/></svg>
<svg class="abs" style="left:1759px;top:119px" width="20" height="20" viewBox="0 0 24 24" fill="none" stroke="#5a6376" stroke-width="1.7" stroke-linecap="round" stroke-linejoin="round"><g transform="translate(24 0) scale(-1 1)"><path d="M7 10h3v-3l-3.5-3.5a6 6 0 0 1 8 8l6 6a2 2 0 0 1-3 3l-6-6a6 6 0 0 1-8-8l3.5 3.5"/></g></svg>
<div class="abs" style="left:1784.5px;top:108px;width:110px;height:41.5px;border:4.5px solid #e2382e;border-radius:8px;background:#7a52dc;box-shadow:inset 0 0 0 0 #fff"></div>
<div class="abs" style="left:1803px;top:121px;font-size:13px;font-weight:bold;color:#fff;letter-spacing:-0.75px">Raporla</div>
<svg class="abs" style="left:1852px;top:119px" width="20" height="20" viewBox="0 0 20 20" fill="none" stroke="#fff" stroke-width="2.4" stroke-linecap="round"><circle cx="8" cy="8" r="6"/><path d="M12.5 12.5l5.5 5.5"/></svg>
<!-- filter card -->
<div class="abs" style="left:304px;top:152.5px;width:1586px;height:96px;background:#fff;border:1px solid #e8e9ee;border-radius:10px;overflow:hidden">
  <div class="abs" style="left:0;top:0;width:1585px;height:37px;background:#f8f9fb;border-bottom:1px solid #e6e8ec"></div>
</div>
<div class="abs" style="left:329px;top:162px;font-size:16px;color:#2e2e36">Filtreler</div>
<div class="abs" style="left:393px;top:159px;width:109px;height:24px;background:#fde8eb;border-radius:5px;font-size:13px;color:#d23349;text-align:center;line-height:25px;letter-spacing:-0.1px">Tümünü Temizle</div>
<div class="abs chip" style="left:508px;top:159.5px;width:64px;height:24px;border:1px solid #d5d8de;border-radius:4px;background:#fff"><span class="abs" style="left:9px;top:3.5px;font-size:12.5px;color:#4b5567;letter-spacing:-0.45px">Ay : 4</span><svg class="abs" style="left:43px;top:5px" width="13" height="13" viewBox="0 0 13 13" stroke="#4b5567" stroke-width="1.4"><path d="M1.5 1.5l10 10M11.5 1.5l-10 10"/></svg></div>
<div class="abs chip" style="left:578.5px;top:159.5px;width:89px;height:24px;border:1px solid #d5d8de;border-radius:4px;background:#fff"><span class="abs" style="left:9px;top:3.5px;font-size:12.5px;color:#4b5567;letter-spacing:-0.45px">Yıl : 2.024</span><svg class="abs" style="left:68px;top:5px" width="13" height="13" viewBox="0 0 13 13" stroke="#4b5567" stroke-width="1.4"><path d="M1.5 1.5l10 10M11.5 1.5l-10 10"/></svg></div>
<!-- inputs -->
<div class="abs inp" style="left:314px;top:201px;width:122px;height:36px"></div>
<div class="abs inp" style="left:442px;top:201px;width:123px;height:36px"></div>
<div class="abs inp" style="left:571px;top:201px;width:254px;height:36px"></div>
<div class="abs inp" style="left:830px;top:201px;width:70px;height:36px"></div>
<div class="abs lblsm" style="left:320px;top:198px">Ay *</div>
<div class="abs lblsm" style="left:449px;top:198px">Yıl *</div>
<div class="abs" style="left:322px;top:213px;font-size:13px;color:#2e2e36">4</div>
<div class="abs" style="left:451px;top:213px;font-size:13px;color:#2e2e36">2024</div>
<div class="abs" style="left:580px;top:212px;font-size:12.5px;color:#8a909c;letter-spacing:0.1px">Departman</div>
<div class="abs" style="left:839px;top:212px;font-size:12.5px;color:#8a909c;letter-spacing:-0.2px">Sıralama</div>
<div class="abs" style="left:309px;top:189px;width:591px;height:54px;border:5px solid #e2382e;border-radius:8px"></div>
<!-- print menu -->
<div class="abs" style="left:911.5px;top:143px;width:706px;height:94px;border:5px solid #e2382e;border-radius:8px;background:#fff;box-shadow:0 4px 8px rgba(0,0,0,.12)"></div>
<div class="abs mi" style="left:930px;top:166px">Toplu Bordro Raporu Al</div>
<div class="abs mi" style="left:1095px;top:166px">Toplu Bordro Tip Gruplu</div>
<div class="abs mi" style="left:1362px;top:166px">SSK Matrah Kontrol Raporu</div>
<div class="abs mi" style="left:930px;top:202px">Toplu Bordro Çift Satırlı</div>
<div class="abs mi" style="left:1095px;top:202px">Toplu Bordro Raporu (Departman Gruplu)</div>
<div class="abs mi" style="left:1362px;top:202px">Toplu Bordro Raporu (Departman Gruplu)</div>
<svg class="abs" style="left:1854px;top:162px" width="13" height="9" viewBox="0 0 13 9" fill="none" stroke="#4b5567" stroke-width="1.8"><path d="M1.5 7.5l5-5 5 5"/></svg>
<!-- arrow -->
<svg class="abs" style="left:1570px;top:130px" width="80" height="55" viewBox="0 0 80 55" fill="none"><path d="M61.5 8 L15 42" stroke="#e2382e" stroke-width="4" stroke-linecap="round"/><path d="M11.5 45.5 L14 33 L23 43 Z" fill="#e2382e" stroke="#e2382e" stroke-width="2" stroke-linejoin="round"/></svg>
</body></html>
